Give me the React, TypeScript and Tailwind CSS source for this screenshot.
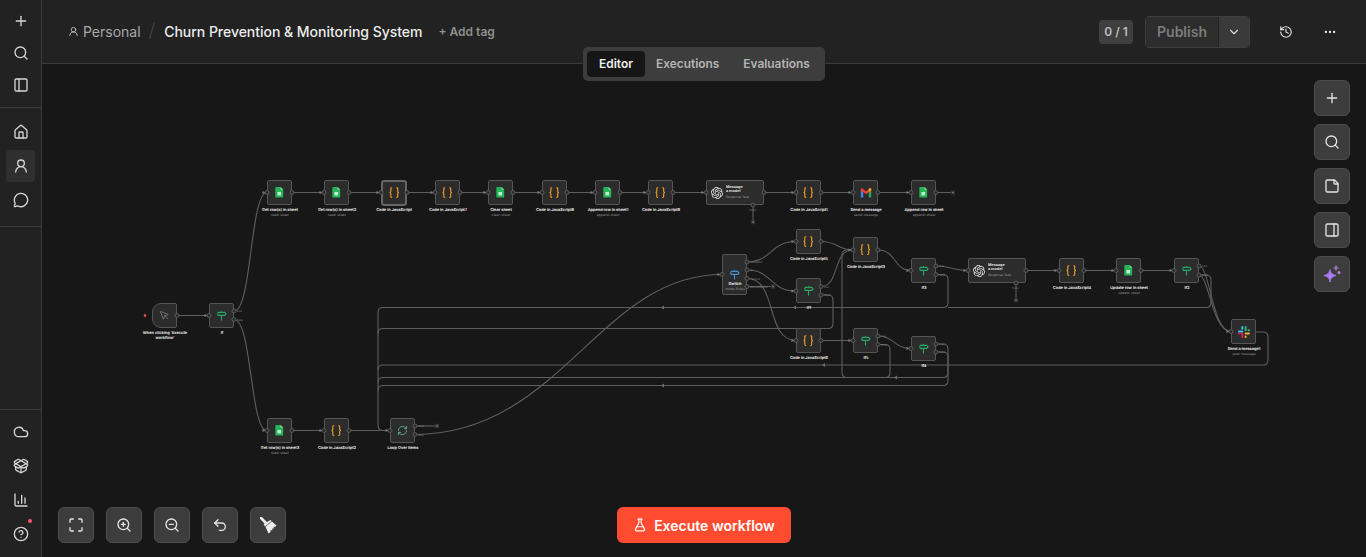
import React from 'react';
import {
  Plus, Search, PanelLeft, PanelRight, House, UserRound, MessageCircle, Cloud, PackageOpen, ChartColumn,
  CircleHelp, Maximize, ZoomIn, ZoomOut, Undo2, FlaskConical, History, Ellipsis, ChevronDown, StickyNote,
  RefreshCw, MousePointer,
} from 'lucide-react';
import { SiOpenai } from 'react-icons/si';

const Sheet = () => (
  <svg width="8.500" height="10.500" viewBox="0 0 9 12">
    <path d="M1 0H6L9 3V11a1 1 0 0 1-1 1H1a1 1 0 0 1-1-1V1a1 1 0 0 1 1-1Z" fill="#22b455" />
    <path d="M6 0L9 3H6Z" fill="#8ed1a6" />
    <rect x="2.400" y="5.600" width="4.200" height="4" fill="#c5ecd2" />
  </svg>
);
const Code = () => (
  <svg width="10.500" height="12" viewBox="0 0 12 14" fill="none" stroke="#f7a125" strokeWidth="1.300">
    <path d="M3.600.8H3a1 1 0 0 0-1 1v3a1.600 1.600 0 0 1-1.400 1.700 1.600 1.600 0 0 1 1.400 1.700v3a1 1 0 0 0 1 1h.6" />
    <path d="M8.400.8H9a1 1 0 0 1 1 1v3a1.600 1.600 0 0 0 1.400 1.700 1.600 1.600 0 0 0-1.400 1.700v3a1 1 0 0 1-1 1h-.6" />
  </svg>
);
const Sign = ({ color }: { color: string }) => (
  <svg width="11" height="10" viewBox="0 0 12 11" fill="none" stroke={color} strokeWidth="1.200">
    <path d="M2.500 1.500H9.500L11 3.200 9.500 4.800H2.500Q1 3.200 2.500 1.500Z" />
    <path d="M6 .2V1.500M6 4.800V10.500" />
  </svg>
);
const Gmail = () => (
  <svg width="12" height="10" viewBox="0 0 12 10" fill="none">
    <path d="M.8 9.500V2L3.200 4V9.500Z" fill="#4285f4" />
    <path d="M8.800 9.500V4L11.200 2V9.500Z" fill="#34a853" />
    <path d="M.8 2.500V1.300C.8.400 1.800 0 2.500.6L6 3.400 9.500.6C10.200 0 11.200.4 11.200 1.300V2.500L8.800 4.500V4L6 6.200 3.200 4V4.500Z" fill="#ea4335" />
    <path d="M8.800 4L11.200 2V1.300C11.200.4 10.200 0 9.500.6L8.800 1.200Z" fill="#fbbc04" />
  </svg>
);
const Slack = () => (
  <svg width="12" height="12" viewBox="0 0 12 12">
    <rect x="0" y="4.400" width="5.300" height="2" rx="1" fill="#36c5f0" />
    <rect x="3.300" y="0" width="2" height="3.700" rx="1" fill="#36c5f0" />
    <rect x="6.600" y="0" width="2" height="5.300" rx="1" fill="#2eb67d" />
    <rect x="9.500" y="3.300" width="2.500" height="2" rx="1" fill="#2eb67d" />
    <rect x="6.600" y="6.600" width="5.400" height="2" rx="1" fill="#ecb22e" />
    <rect x="6.600" y="9.400" width="2" height="2.600" rx="1" fill="#ecb22e" />
    <rect x="3.300" y="6.600" width="2" height="5.400" rx="1" fill="#e01e5a" />
    <rect x="0" y="6.600" width="2.600" height="2" rx="1" fill="#e01e5a" />
  </svg>
);
const Sparkle = () => (
  <svg width="20" height="20" viewBox="0 0 20 20">
    <path d="M8 5.500C8.600 9 10 10.500 14 11.500 10 12.500 8.600 14 8 18 7.400 14 6 12.500 2 11.500 6 10.500 7.400 9 8 5.500Z" fill="#a87cf3" stroke="#a87cf3" strokeLinejoin="round" />
    <path d="M14 1.500V6.500M11.500 4H16.500" stroke="#b985e8" strokeWidth="1.200" />
    <circle cx="17" cy="8.500" r="1.500" fill="#c77bd8" />
  </svg>
);
const Broom = () => (
  <svg width="17" height="17" viewBox="0 0 17 17">
    <path d="M1 1L6.500 6.500" stroke="#eeeeee" strokeWidth="2.600" strokeLinecap="round" />
    <path d="M3.500 7L10.500 3 11.500 4 5 9.500Z" fill="#eeeeee" />
    <path d="M5.500 9.800L11.800 4.500 16.500 8.500 15 10 13.500 9.500 14 11.500 12 11.500 12.500 13.500 10.500 13 10.500 15 8.500 16.500Z" fill="#eeeeee" />
  </svg>
);

type N = {
  x: number; y: number; w?: number; h?: number; icon: React.ReactNode; label?: string; sub?: string;
  selected?: boolean; trigger?: boolean; msg?: boolean; two?: boolean;
};
const code = <Code />;
const sheet = <Sheet />;
const green = <Sign color="#2aa866" />;
const msgIcon = <SiOpenai size={12} color="#e8e8e8" />;

const nodes: N[] = [
  { x: 152, y: 303, icon: <MousePointer size={11} color="#8a8a8a" strokeWidth={1.500} />, label: "When clicking 'Execute workflow'", trigger: true, two: true },
  { x: 209, y: 303, icon: green, label: 'If' },
  { x: 267, y: 180, icon: sheet, label: 'Get row(s) in sheet', sub: 'read: sheet' },
  { x: 324, y: 180, icon: sheet, label: 'Get row(s) in sheet2', sub: 'read: sheet' },
  { x: 381, y: 180, w: 26, h: 26, icon: code, label: 'Code in JavaScript', selected: true },
  { x: 435, y: 180, icon: code, label: 'Code in JavaScript7' },
  { x: 488, y: 180, icon: sheet, label: 'Clear sheet', sub: 'clear: sheet' },
  { x: 542, y: 180, icon: code, label: 'Code in JavaScript8' },
  { x: 595, y: 180, icon: sheet, label: 'Append row in sheet1', sub: 'append: sheet' },
  { x: 648, y: 180, icon: code, label: 'Code in JavaScript9' },
  { x: 706, y: 180, w: 58, icon: msgIcon, msg: true },
  { x: 796, y: 180, icon: code, label: 'Code in JavaScript1' },
  { x: 853, y: 180, icon: <Gmail />, label: 'Send a message', sub: 'send: message' },
  { x: 911, y: 180, icon: sheet, label: 'Append row in sheet', sub: 'append: sheet' },
  { x: 722, y: 254, h: 41, icon: <Sign color="#4a90d9" />, label: 'Switch', sub: 'mode: Rules' },
  { x: 796, y: 229, icon: code, label: 'Code in JavaScript5' },
  { x: 796, y: 278, icon: green, label: 'If1' },
  { x: 796, y: 328, icon: code, label: 'Code in JavaScript6' },
  { x: 853, y: 237, icon: code, label: 'Code in JavaScript3' },
  { x: 853, y: 328, icon: green, label: 'If5' },
  { x: 911, y: 258, icon: green, label: 'If3' },
  { x: 911, y: 336, icon: green, label: 'If4' },
  { x: 968, y: 258, w: 58, icon: msgIcon, msg: true },
  { x: 1059, y: 258, icon: code, label: 'Code in JavaScript4' },
  { x: 1116, y: 258, icon: sheet, label: 'Update row in sheet', sub: 'update: sheet' },
  { x: 1174, y: 258, icon: green, label: 'If2' },
  { x: 1231, y: 319, icon: <Slack />, label: 'Send a message1', sub: 'post: message' },
  { x: 267, y: 418, icon: sheet, label: 'Get row(s) in sheet3', sub: 'read: sheet' },
  { x: 324, y: 418, icon: code, label: 'Code in JavaScript2' },
  { x: 390, y: 418, icon: <RefreshCw size={11} color="#5fb8a0" strokeWidth={1.800} />, label: 'Loop Over Items' },
];

const edges = [
  'M177 315.500H209',
  'M234 311C252 311 250 192.500 267 192.500',
  'M234 319.500C252 319.500 250 430.500 267 430.500',
  'M292 192.500H324', 'M349 192.500H381', 'M407 192.500H435', 'M460 192.500H488', 'M513 192.500H542',
  'M567 192.500H595', 'M620 192.500H648', 'M673 192.500H706', 'M764 192.500H796', 'M821 192.500H853',
  'M878 192.500H911', 'M936 192.500H951', 'M753 205V220',
  'M292 430.500H324', 'M349 430.500H390', 'M415 426H435',
  'M415 434.500C560 434.500 600 274.500 722 274.500',
  'M747 262C772 262 770 241.500 796 241.500',
  'M747 270C772 270 770 291 796 291',
  'M747 278.500C778 278.500 765 340.500 796 340.500',
  'M747 286.500H771',
  'M821 241.500C838 241.500 838 250 853 250',
  'M821 286.500C840 286.500 832 250 853 250',
  'M878 250C896 250 894 270.500 911 270.500',
  'M936 266C950 266 954 270.500 968 270.500',
  'M1026 270.500H1059', 'M1084 270.500H1116', 'M1141 270.500H1174', 'M1016 283V298',
  'M1199 266C1210 266 1212 331.500 1231 331.500',
  'M1199 275C1209 275 1212 331.500 1231 331.500',
  'M821 340.500H853',
  'M878 336C894 336 894 348.500 911 348.500',
  'M936 274.500H943Q948 274.500 948 279.500V302.500Q948 307.500 943 307.500H383Q378 307.500 378 312.500V425Q378 430.500 383 430.500H390',
  'M1199 275H1206Q1211 275 1211 280V302.500Q1211 307.500 1206 307.500H948',
  'M821 295H828Q833 295 833 300V323.500Q833 328.500 828 328.500H383Q378 328.500 378 333.500',
  'M1256 332H1263Q1268 332 1268 337V360Q1268 365 1263 365H383Q378 365 378 370',
  'M878 344.500H885Q890 344.500 890 349.500V372.500Q890 377.500 885 377.500H383Q378 377.500 378 382.500',
  'M936 344H943Q948 344 948 349V372.500Q948 377.500 943 377.500H890',
  'M936 352H943Q948 352 948 357V380.500Q948 385.500 943 385.500H383Q378 385.500 378 390.500',
  'M890 377.500H847Q842 377.500 842 372.500V255Q842 250 847 250H853',
];
const inputs: [number, number][] = [
  [209, 315.500], [267, 192.500], [324, 192.500], [381, 192.500], [435, 192.500], [488, 192.500], [542, 192.500], [595, 192.500],
  [648, 192.500], [706, 192.500], [796, 192.500], [853, 192.500], [911, 192.500], [722, 274.500], [796, 241.500], [796, 291],
  [796, 340.500], [853, 250], [853, 340.500], [911, 270.500], [911, 348.500], [968, 270.500], [1059, 270.500], [1116, 270.500],
  [1174, 270.500], [1231, 331.500], [267, 430.500], [324, 430.500], [390, 430.500],
];
const outputs: [number, number][] = [
  [177, 315.500], [234, 311], [234, 319.500], [292, 192.500], [349, 192.500], [407, 192.500], [460, 192.500], [513, 192.500],
  [567, 192.500], [620, 192.500], [673, 192.500], [764, 192.500], [821, 192.500], [878, 192.500], [936, 192.500], [753, 205],
  [1016, 283], [747, 262], [747, 270], [747, 278.500], [747, 286.500], [821, 241.500], [821, 286.500], [821, 295], [878, 250],
  [936, 266], [936, 274.500], [1026, 270.500], [1084, 270.500], [1141, 270.500], [1199, 266], [1199, 275], [821, 340.500],
  [878, 336], [878, 344.500], [936, 344], [936, 352], [292, 430.500], [349, 430.500], [415, 426], [415, 434.500],
];
const stubs: [number, number][] = [[953, 192.500], [753, 222], [1016, 300], [773, 286.500], [437, 426]];
const backArrows: [number, number][] = [[663, 307.500], [795, 307.500], [824, 365], [896, 377.500], [663, 385.500]];
const portLabels: { x: number; y: number; t: string }[] = [
  { x: 237, y: 311, t: 'true' }, { x: 237, y: 319.500, t: 'false' },
  { x: 750, y: 262, t: 'Complete' }, { x: 750, y: 270, t: 'All' }, { x: 750, y: 278.500, t: 'Inactive' }, { x: 750, y: 286.500, t: 'Unresponsive' },
  { x: 824, y: 286.500, t: 'true' }, { x: 824, y: 295, t: 'false' }, { x: 881, y: 336, t: 'true' }, { x: 881, y: 344.500, t: 'false' },
  { x: 939, y: 266, t: 'true' }, { x: 939, y: 274.500, t: 'false' }, { x: 939, y: 344, t: 'true' }, { x: 939, y: 352, t: 'false' },
  { x: 1202, y: 266, t: 'true' }, { x: 1202, y: 275, t: 'false' }, { x: 418, y: 426, t: 'done' }, { x: 418, y: 434.500, t: 'loop' },
  { x: 749, y: 210, t: 'Tools' }, { x: 1012, y: 288, t: 'Tools' },
];

function Node({ n }: { n: N }) {
  const w = n.w ?? 25;
  const h = n.h ?? 25;
  return (
    <div className="absolute" style={{ left: n.x, top: n.y, width: w, height: h }}>
      <div
        className={`relative flex h-full w-full items-center bg-[#2c2c2c] ${n.selected ? 'border-2 border-[#666666] rounded-[3px]' : 'border border-[#555555] rounded-[2px]'} ${n.msg ? 'justify-start pl-[4px]' : 'justify-center'} ${n.trigger ? 'rounded-l-[9px]' : ''}`}
      >
        {n.icon}
        {n.msg && (
          <div className="absolute top-[3px] left-[19px] w-[90px] origin-top-left scale-[0.27] text-[14px] leading-[18px] font-semibold text-[#f4f4f4]">
            <div className="w-[70px]">Message a model</div>
            <div className="mt-[4px] text-[12px] leading-[15px] font-normal text-[#9a9a9a]">Response Task</div>
          </div>
        )}
      </div>
      {n.label && (
        <div className={`absolute top-[26.500px] left-1/2 -translate-x-1/2 origin-top scale-[0.28] text-center ${n.two ? 'w-[170px]' : 'w-[260px]'}`}>
          <div className="text-[14px] leading-[18px] font-semibold text-[#ffffff]">{n.label}</div>
          {n.sub && <div className="text-[12px] leading-[20px] text-[#9a9a9a]">{n.sub}</div>}
        </div>
      )}
    </div>
  );
}

function SideIcon({ children, active }: { children: React.ReactNode; active?: boolean }) {
  return (
    <div className={`flex h-[32px] w-[29px] items-center justify-center rounded-[4px] text-[#d6d6d6] ${active ? 'bg-[#2f2f2f]' : ''}`}>
      {children}
    </div>
  );
}

function ToolButton({ children }: { children: React.ReactNode }) {
  return (
    <button className="flex h-[36px] w-[36px] items-center justify-center rounded-[6px] border border-[#4c4c4c] bg-[#3d3d3d] text-[#e4e4e4]">
      {children}
    </button>
  );
}

export default function App() {
  return (
    <div className="flex h-[557px] w-[1366px] overflow-hidden bg-[#171717] [font-family:Inter,sans-serif]">
      <aside className="flex h-full w-[42px] shrink-0 flex-col items-stretch border-r border-[#3b3b3b] bg-[#222222]">
        <div className="flex h-[108px] flex-col items-center gap-0 border-b border-[#3b3b3b] pt-[5px]">
          <SideIcon><Plus size={16} /></SideIcon>
          <SideIcon><Search size={16} /></SideIcon>
          <SideIcon><PanelLeft size={16} /></SideIcon>
        </div>
        <div className="flex h-[119px] flex-col items-center gap-[2px] border-b border-[#3b3b3b] pt-[8px]">
          <SideIcon><House size={16} /></SideIcon>
          <SideIcon active><UserRound size={16} /></SideIcon>
          <SideIcon><MessageCircle size={16} /></SideIcon>
        </div>
        <div className="mt-auto flex h-[148px] flex-col items-center gap-[2px] border-t border-[#3b3b3b] pt-[6px]">
          <SideIcon><Cloud size={16} /></SideIcon>
          <SideIcon><PackageOpen size={16} /></SideIcon>
          <SideIcon><ChartColumn size={16} /></SideIcon>
          <div className="relative">
            <SideIcon><CircleHelp size={16} /></SideIcon>
            <span className="absolute top-[1px] right-[3px] h-[4px] w-[4px] rounded-full bg-[#f9566b]" />
          </div>
        </div>
      </aside>

      <main className="flex h-full min-w-0 flex-1 flex-col">
        <header className="relative z-20 flex h-[64px] shrink-0 items-center border-b border-[#3b3b3b] bg-[#222222] pr-[29px] pl-[26px]">
          <UserRound size={11} className="text-[#bdbdbd]" />
          <span className="ml-[4px] text-[14px] text-[#a8a8a8]">Personal</span>
          <span className="ml-[8px] text-[19px] font-light text-[#444444]">/</span>
          <span className="ml-[9px] text-[14px] font-medium tracking-[-0.030px] text-[#ececec]">Churn Prevention &amp; Monitoring System</span>
          <span className="ml-[16px] text-[12px] font-semibold text-[#8f8f8f]">+ Add tag</span>

          <div className="ml-auto flex items-center">
            <span className="flex h-[24px] w-[34px] items-center justify-center rounded-[4px] bg-[#3f3f3f] text-[12px] font-semibold text-[#bcbcbc]">0 / 1</span>
            <div className="ml-[12px] flex h-[32px] w-[105px] overflow-hidden rounded-[4px] border border-[#3f3f3f]">
              <span className="flex w-[72px] items-center justify-center bg-[#2d2d2d] text-[14px] font-semibold text-[#7c7c7c]">Publish</span>
              <span className="flex flex-1 items-center justify-center border-l border-[#222222] bg-[#3a3a3a] text-[#d8d8d8]"><ChevronDown size={14} /></span>
            </div>
            <History size={14} className="ml-[29px] text-[#e0e0e0]" />
            <Ellipsis size={14} className="ml-[30px] text-[#ececec]" />
          </div>

          <div className="absolute top-[47px] left-[541px] flex h-[34px] w-[242px] items-center rounded-[5px] bg-[#3d3d3d] px-[4px] text-[11.900px] font-semibold text-[#b4b4b4]">
            <span className="flex h-[26px] w-[58px] items-center justify-center rounded-[4px] bg-[#161616] text-[#f0f0f0]">Editor</span>
            <span className="ml-[11px]">Executions</span>
            <span className="ml-[24px]">Evaluations</span>
          </div>
        </header>

        <section className="relative min-h-0 flex-1 overflow-hidden bg-[#171717] bg-[radial-gradient(#232323_0.500px,transparent_0.600px)] bg-[size:5.200px_5.200px]">
          <div className="absolute -top-[64px] -left-[42px] h-[557px] w-[1366px] [text-rendering:geometricPrecision]">
            <svg className="absolute inset-0" width="1366" height="557" fill="none">
              {edges.map((d, i) => <path key={i} d={d} stroke="#5e5e5e" strokeWidth="1.100" />)}
              <path d="M143.500 315.500l1.500-2 1.500 2-1.500 2Z" fill="#d9534f" />
            </svg>
            {nodes.map((n, i) => <Node key={i} n={n} />)}
            <svg className="absolute inset-0" width="1366" height="557">
              {inputs.map(([x, y], i) => (
                <g key={i}>
                  <path d={`M${x - 4.500} ${y - 1.500}L${x - 1.500} ${y}L${x - 4.500} ${y + 1.500}Z`} fill="#808080" />
                  <circle cx={x} cy={y} r="2" fill="#2a2a2a" stroke="#666666" strokeWidth=".8" />
                </g>
              ))}
              {outputs.map(([x, y], i) => (
                <circle key={i} cx={x} cy={y} r="2" fill="#2a2a2a" stroke="#666666" strokeWidth=".8" />
              ))}
              {stubs.map(([x, y], i) => (
                <g key={i}>
                  <rect x={x - 2.200} y={y - 2.200} width="4.400" height="4.400" rx=".6" fill="#303030" />
                  <rect x={x - .7} y={y - .7} width="1.400" height="1.400" fill="#8a8a8a" />
                </g>
              ))}
              {backArrows.map(([x, y], i) => (
                <path key={i} d={`M${x - 2} ${y}L${x + 1} ${y - 2}V${y + 2}Z`} fill="#707070" />
              ))}
            </svg>
            {portLabels.map((p, i) => (
              <span key={i} className="absolute origin-top-left scale-[0.27] text-[10px] leading-[14px] text-[#8a8a8a]" style={{ left: p.x, top: p.y - 2 }}>{p.t}</span>
            ))}
          </div>

          <div className="absolute top-[16px] right-[16px] flex flex-col gap-[8px]">
            <ToolButton><Plus size={16} /></ToolButton>
            <ToolButton><Search size={16} /></ToolButton>
            <ToolButton><StickyNote size={16} /></ToolButton>
            <ToolButton><PanelRight size={16} /></ToolButton>
            <ToolButton><Sparkle /></ToolButton>
          </div>

          <div className="absolute bottom-[14px] left-[16px] flex gap-[12px]">
            <ToolButton><Maximize size={16} /></ToolButton>
            <ToolButton><ZoomIn size={16} /></ToolButton>
            <ToolButton><ZoomOut size={16} /></ToolButton>
            <ToolButton><Undo2 size={16} /></ToolButton>
            <ToolButton><Broom /></ToolButton>
          </div>

          <button className="absolute bottom-[14px] left-[575px] flex h-[36px] w-[174px] items-center justify-center gap-[7px] rounded-[6px] bg-[#ff4b30] text-[14px] font-semibold text-white">
            <FlaskConical size={14} />
            Execute workflow
          </button>
        </section>
      </main>
    </div>
  );
}
